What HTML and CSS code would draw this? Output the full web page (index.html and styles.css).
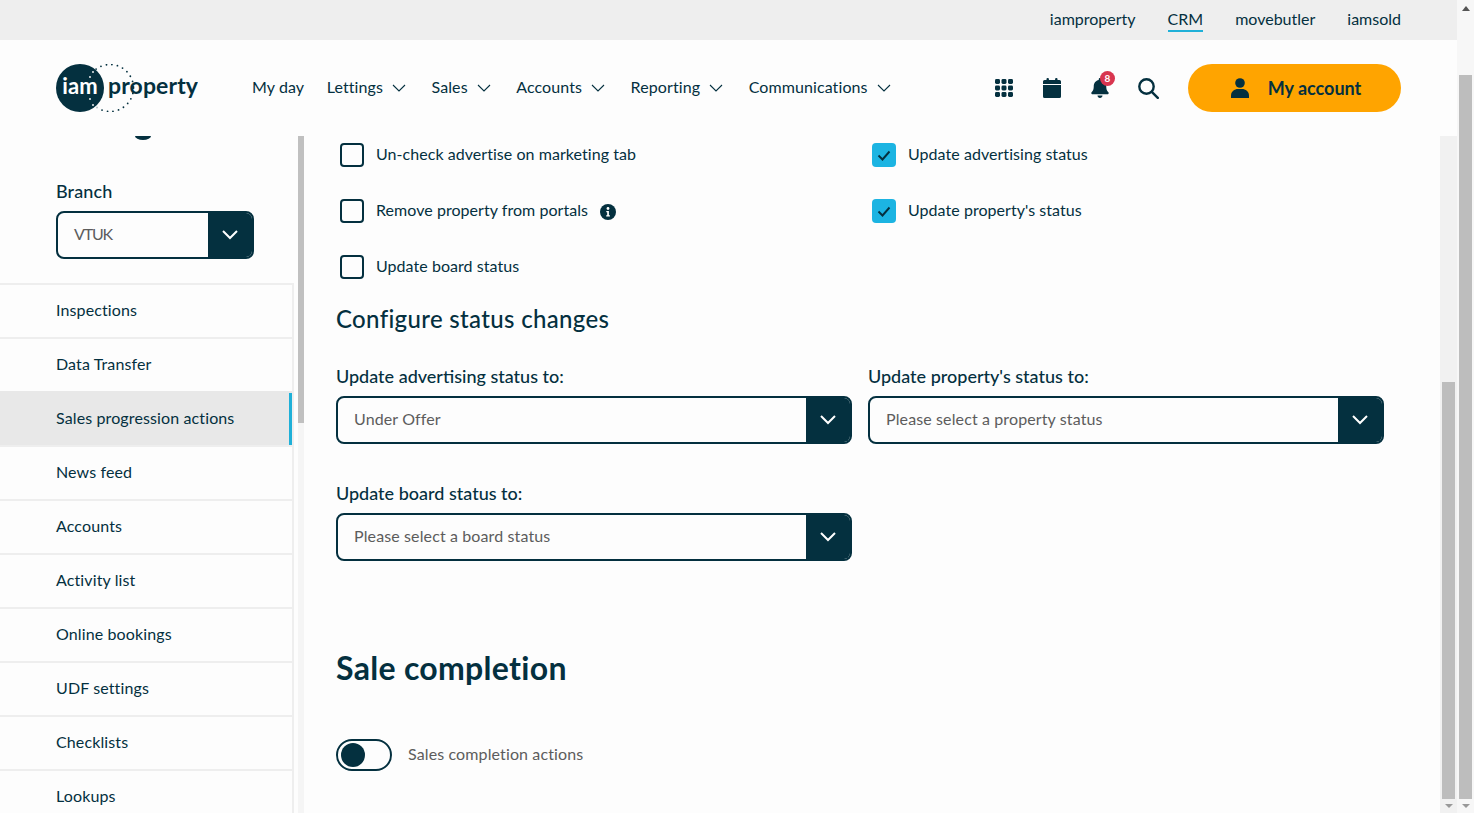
FILE: index.html
```html
<!DOCTYPE html>
<html lang="en">
<head>
	<meta charset="UTF-8">
	<meta name="viewport" content="width=device-width, initial-scale=1">
	<title>Sales progression actions</title>
	<link rel="stylesheet" href="styles.css">
</head>
<body>
	<div class="page">
		<div class="topbar">
			<a class="top-link">iamproperty</a>
			<a class="top-link active">CRM</a>
			<a class="top-link">movebutler</a>
			<a class="top-link">iamsold</a>
		</div>

		<header class="header">
			<svg class="logo" width="142" height="48" viewBox="0 0 142 48">
				<circle cx="54" cy="24" r="23.5" fill="none" stroke="#04303f" stroke-width="1.800" stroke-linecap="round" stroke-dasharray="0 5.600"/>
				<circle cx="24" cy="24" r="24" fill="#04303f"/>
				<g fill="#fff">
					<circle cx="37" cy="8" r="0.900"/>
					<circle cx="34" cy="13" r="0.900"/>
					<circle cx="34" cy="35" r="0.900"/>
					<circle cx="37" cy="41" r="0.900"/>
					<circle cx="41" cy="44" r="0.900"/>
				</g>
				<text x="24" y="30" text-anchor="middle" class="logo-iam">iam</text>
				<text x="52" y="30" class="logo-word">property</text>
			</svg>
			<nav class="nav">
				<a class="nav-item">My day</a>
				<a class="nav-item">Lettings <svg class="chev" width="14" height="8" viewBox="0 0 14 8"><path d="M1 1l6 6 6-6" fill="none" stroke="#04303f" stroke-width="1.100"/></svg></a>
				<a class="nav-item">Sales <svg class="chev" width="14" height="8" viewBox="0 0 14 8"><path d="M1 1l6 6 6-6" fill="none" stroke="#04303f" stroke-width="1.100"/></svg></a>
				<a class="nav-item">Accounts <svg class="chev" width="14" height="8" viewBox="0 0 14 8"><path d="M1 1l6 6 6-6" fill="none" stroke="#04303f" stroke-width="1.100"/></svg></a>
				<a class="nav-item">Reporting <svg class="chev" width="14" height="8" viewBox="0 0 14 8"><path d="M1 1l6 6 6-6" fill="none" stroke="#04303f" stroke-width="1.100"/></svg></a>
				<a class="nav-item">Communications <svg class="chev" width="14" height="8" viewBox="0 0 14 8"><path d="M1 1l6 6 6-6" fill="none" stroke="#04303f" stroke-width="1.100"/></svg></a>
			</nav>
			<div class="tools">
				<span class="tool">
					<svg width="18" height="18" viewBox="0 0 18 18" fill="#04303f">
						<rect x="0" y="0" width="5" height="5" rx="1.400"/><rect x="6.500" y="0" width="5" height="5" rx="1.400"/><rect x="13" y="0" width="5" height="5" rx="1.400"/>
						<rect x="0" y="6.500" width="5" height="5" rx="1.400"/><rect x="6.500" y="6.500" width="5" height="5" rx="1.400"/><rect x="13" y="6.500" width="5" height="5" rx="1.400"/>
						<rect x="0" y="13" width="5" height="5" rx="1.400"/><rect x="6.500" y="13" width="5" height="5" rx="1.400"/><rect x="13" y="13" width="5" height="5" rx="1.400"/>
					</svg>
				</span>
				<span class="tool">
					<svg width="18" height="20" viewBox="0 0 18 20" fill="#04303f">
						<rect x="3.500" y="0" width="2.400" height="4" rx="1"/><rect x="12.100" y="0" width="2.400" height="4" rx="1"/>
						<path d="M1.500 2h15A1.500 1.500 0 0 1 18 3.500V6H0V3.500A1.500 1.500 0 0 1 1.500 2zM0 7h18v11.500a1.500 1.500 0 0 1-1.500 1.500h-15A1.500 1.500 0 0 1 0 18.500z"/>
					</svg>
				</span>
				<span class="tool bell">
					<svg width="18" height="20" viewBox="0 0 448 512" fill="#04303f"><path d="M224 512c35.320 0 63.970-28.650 63.970-64H160.030c0 35.350 28.650 64 63.970 64zm215.390-149.710c-19.320-20.760-55.470-51.990-55.470-154.290 0-77.700-54.480-139.900-127.940-155.160V32c0-17.670-14.320-32-31.980-32s-31.980 14.330-31.980 32v20.840C118.560 68.100 64.080 130.300 64.080 208c0 102.300-36.150 133.530-55.470 154.290-6 6.450-8.660 14.160-8.610 21.710.11 16.400 12.980 32 32.100 32h383.800c19.120 0 32-15.600 32.100-32 .05-7.550-2.610-15.270-8.610-21.710z"/></svg>
					<span class="badge">8</span>
				</span>
				<span class="tool">
					<svg width="21" height="21" viewBox="0 0 21 21" fill="none" stroke="#04303f" stroke-width="2.400"><circle cx="8.500" cy="8.500" r="7.200"/><path d="M13.800 13.800l6 6" stroke-linecap="round"/></svg>
				</span>
				<a class="account">
					<svg width="18" height="20" viewBox="0 0 18 20" fill="#04303f"><circle cx="9" cy="5" r="4.800"/><path d="M0 20v-2.500C0 13.400 3.500 11 7 11h4c3.500 0 7 2.400 7 6.500V20z"/></svg>
					My account
				</a>
			</div>
		</header>

		<div class="main">
			<aside class="sidebar">
				<div class="side-inner">
					<div class="side-top">
						<span class="sliver"></span>
						<label class="side-label">Branch</label>
						<div class="select select-small">
							<span class="select-text">VTUK</span>
							<span class="select-btn"><svg width="16" height="10" viewBox="0 0 16 10"><path d="M1 1l7 7 7-7" fill="none" stroke="#fff" stroke-width="2"/></svg></span>
						</div>
					</div>
					<ul class="side-nav">
						<li class="side-item">Inspections</li>
						<li class="side-item">Data Transfer</li>
						<li class="side-item selected">Sales progression actions</li>
						<li class="side-item">News feed</li>
						<li class="side-item">Accounts</li>
						<li class="side-item">Activity list</li>
						<li class="side-item">Online bookings</li>
						<li class="side-item">UDF settings</li>
						<li class="side-item">Checklists</li>
						<li class="side-item">Lookups</li>
					</ul>
				</div>
				<div class="side-scroll"><div class="side-thumb"></div></div>
			</aside>

			<section class="content">
				<div class="checks">
					<label class="check"><span class="box"></span><span class="check-text">Un-check advertise on marketing tab</span></label>
					<label class="check"><span class="box on"><svg width="14" height="11" viewBox="0 0 14 11"><path d="M1.500 5.500l4 4 7-8" fill="none" stroke="#04303f" stroke-width="1.900"/></svg></span><span class="check-text">Update advertising status</span></label>
					<label class="check"><span class="box"></span><span class="check-text">Remove property from portals</span>
						<svg class="info" width="16" height="16" viewBox="0 0 16 16"><circle cx="8" cy="8" r="8" fill="#04303f"/><circle cx="8" cy="4.500" r="1.400" fill="#fff"/><path d="M6.300 7h2.600v4.200h1v1.300H6.200v-1.300h1V8.300h-.9z" fill="#fff"/></svg>
					</label>
					<label class="check"><span class="box on"><svg width="14" height="11" viewBox="0 0 14 11"><path d="M1.500 5.500l4 4 7-8" fill="none" stroke="#04303f" stroke-width="1.900"/></svg></span><span class="check-text">Update property's status</span></label>
					<label class="check"><span class="box"></span><span class="check-text">Update board status</span></label>
				</div>

				<h2 class="sub-heading">Configure status changes</h2>

				<div class="fields">
					<div class="field">
						<label class="field-label">Update advertising status to:</label>
						<div class="select">
							<span class="select-text">Under Offer</span>
							<span class="select-btn"><svg width="16" height="10" viewBox="0 0 16 10"><path d="M1 1l7 7 7-7" fill="none" stroke="#fff" stroke-width="2"/></svg></span>
						</div>
					</div>
					<div class="field">
						<label class="field-label">Update property's status to:</label>
						<div class="select">
							<span class="select-text">Please select a property status</span>
							<span class="select-btn"><svg width="16" height="10" viewBox="0 0 16 10"><path d="M1 1l7 7 7-7" fill="none" stroke="#fff" stroke-width="2"/></svg></span>
						</div>
					</div>
					<div class="field">
						<label class="field-label">Update board status to:</label>
						<div class="select">
							<span class="select-text">Please select a board status</span>
							<span class="select-btn"><svg width="16" height="10" viewBox="0 0 16 10"><path d="M1 1l7 7 7-7" fill="none" stroke="#fff" stroke-width="2"/></svg></span>
						</div>
					</div>
				</div>

				<h1 class="heading">Sale completion</h1>

				<div class="toggle-row">
					<span class="toggle"><span class="knob"></span></span>
					<span class="toggle-text">Sales completion actions</span>
				</div>
			</section>

			<div class="scrollbar inner">
				<div class="scroll-space"></div>
				<div class="scroll-thumb"></div>
				<span class="arrow-down"></span>
			</div>
		</div>
	</div>

	<div class="scrollbar outer">
		<span class="arrow-up"></span>
		<div class="scroll-thumb"></div>
		<span class="arrow-down"></span>
	</div>
</body>
</html>
```

FILE: styles.css
```css
* {
	box-sizing: border-box;
}

html, body {
	height: 100%;
}

body {
	margin: 0;
	display: flex;
	overflow: hidden;
	font-family: 'Lato', sans-serif;
	font-size: 16px;
	letter-spacing: 0.12px;
	color: #04303f;
	background-color: #fdfdfd;
}

.page {
	flex: 1;
	min-width: 0;
	display: flex;
	flex-direction: column;
	height: 813px;
}

/* top strip */
.topbar {
	height: 40px;
	flex: none;
	display: flex;
	justify-content: flex-end;
	align-items: flex-start;
	gap: 32px;
	padding: 9px 56px 0 0;
	background-color: #eeeeee;
	letter-spacing: 0;
}

.top-link {
	height: 23px;
	line-height: 19px;
	font-size: 16px;
}

.top-link.active {
	border-bottom: 2px solid #1fb0d8;
}

/* main header */
.header {
	height: 96px;
	flex: none;
	display: flex;
	align-items: center;
	padding: 0 56px;
}

.logo {
	flex: none;
	margin-right: 54px;
}

.logo-iam {
	font-family: 'Lato', sans-serif;
	font-size: 22px;
	font-weight: 700;
	fill: #fff;
}

.logo-word {
	font-family: 'Lato', sans-serif;
	font-size: 23px;
	font-weight: 700;
	fill: #04303f;
}

.nav {
	display: flex;
	align-items: center;
	gap: 25.5px;
	margin-bottom: 3px;
	letter-spacing: 0.1px;
}

.nav-item {
	display: flex;
	align-items: center;
	gap: 9px;
	font-size: 16px;
}

.nav-item:first-child {
	margin-right: -3px;
}

.chev {
	margin-top: 3px;
}

.tools {
	margin-left: auto;
	display: flex;
	align-items: center;
}

.tool {
	position: relative;
	width: 48px;
	height: 48px;
	display: flex;
	align-items: center;
	justify-content: center;
}

.badge {
	position: absolute;
	top: 7px;
	left: 24px;
	width: 15px;
	height: 15px;
	border-radius: 50%;
	background-color: #d8354f;
	color: #fff;
	font-size: 10px;
	font-weight: 700;
	line-height: 15px;
	text-align: center;
}

.account {
	width: 213px;
	height: 48px;
	margin-left: 16px;
	padding-left: 3px;
	display: flex;
	align-items: center;
	justify-content: center;
	gap: 19px;
	border-radius: 24px;
	background-color: #ffa400;
	font-size: 18px;
	font-weight: 700;
	letter-spacing: 0;
}

.main {
	flex: 1;
	min-height: 0;
	display: flex;
}

/* left column */
.sidebar {
	width: 304px;
	flex: none;
	display: flex;
	justify-content: space-between;
}

.side-inner {
	width: 294px;
	overflow: hidden;
}

.side-top {
	height: 147px;
	padding-left: 56px;
}

.sliver {
	display: block;
	width: 16px;
	height: 4px;
	margin-left: 79px;
	border-radius: 0 0 8px 8px / 0 0 4px 4px;
	background-color: #04303f;
}

.side-label {
	display: block;
	margin-top: 40px;
	height: 24px;
	line-height: 22px;
	font-size: 18px;
	font-weight: 500;
}

.side-nav {
	list-style: none;
	margin: 0;
	padding: 0;
	border-top: 2px solid #eeeeee;
	border-right: 2px solid #eeeeee;
}

.side-item {
	height: 54px;
	padding-left: 56px;
	line-height: 49px;
	border-bottom: 2px solid #eeeeee;
}

.side-item.selected {
	position: relative;
	height: 56px;
	margin-top: -2px;
	padding-top: 2px;
	background-color: #e8e8e8;
}

.side-item.selected::after {
	content: "";
	position: absolute;
	top: 2px;
	bottom: 0;
	right: 0;
	width: 3px;
	background-color: #1fb0d8;
}

.side-scroll {
	width: 6px;
	background-color: #f5f5f5;
}

.side-thumb {
	height: 287px;
	background-color: #c0c0c0;
}

/* form */
.content {
	flex: 1;
	min-width: 0;
	padding: 7px 0 0 32px;
	overflow: hidden;
}

.checks, .fields {
	display: grid;
	grid-template-columns: 516px 516px;
	column-gap: 16px;
}

.checks {
	row-gap: 32px;
}

.check {
	height: 24px;
	padding-left: 4px;
	display: flex;
	align-items: center;
	gap: 12px;
}

.check-text {
	padding-bottom: 4px;
	letter-spacing: 0.05px;
}

.box {
	width: 24px;
	height: 24px;
	flex: none;
	display: flex;
	align-items: center;
	justify-content: center;
	border: 2px solid #04303f;
	border-radius: 4px;
}

.box.on {
	border: none;
	background-color: #1cb4e2;
}

.info {
	flex: none;
	margin-top: 2px;
}

.sub-heading {
	margin: 24px 0 0;
	height: 32px;
	line-height: 32px;
	font-size: 24px;
	font-weight: 500;
	letter-spacing: 0.33px;
}

.fields {
	margin-top: 30px;
	row-gap: 38px;
}

.field-label {
	display: block;
	height: 24px;
	line-height: 22px;
	margin-bottom: 7px;
	font-size: 18px;
	font-weight: 500;
	letter-spacing: 0;
}

.select {
	height: 48px;
	display: flex;
	border: 2px solid #04303f;
	border-radius: 8px;
	overflow: hidden;
}

.select-small {
	width: 198px;
	margin-top: 7px;
}

.select-small .select-text {
	letter-spacing: -1.200px;
}

.select-text {
	flex: 1;
	padding-left: 16px;
	line-height: 42px;
	color: #5c5c5c;
}

.select-btn {
	width: 44px;
	display: flex;
	align-items: center;
	justify-content: center;
	background-color: #04303f;
}

.heading {
	margin: 90px 0 0;
	height: 36px;
	line-height: 34px;
	font-size: 32px;
	font-weight: 700;
	letter-spacing: 0.3px;
}

.toggle-row {
	margin-top: 52px;
	display: flex;
	align-items: center;
	gap: 16px;
}

.toggle {
	width: 56px;
	height: 32px;
	display: flex;
	align-items: center;
	padding-left: 3px;
	border: 2px solid #04303f;
	border-radius: 16px;
}

.knob {
	width: 24px;
	height: 24px;
	border-radius: 50%;
	background-color: #04303f;
}

.toggle-text {
	padding-bottom: 4px;
	color: #5c5c5c;
}

/* scrollbars */
.scrollbar {
	width: 17px;
	flex: none;
	display: flex;
	flex-direction: column;
	align-items: center;
	background-color: #f1f1f1;
}

.scrollbar.outer {
	background-color: #f7f7f7;
}

.scroll-space {
	height: 246px;
	flex: none;
}

.scroll-thumb {
	width: 13px;
	flex: 1;
	background-color: #bdbdbd;
}

.arrow-up, .arrow-down {
	flex: none;
	width: 0;
	height: 0;
	border-left: 4px solid transparent;
	border-right: 4px solid transparent;
}

.arrow-up {
	margin: 6px 0 64px;
	border-bottom: 5px solid #555;
}

.arrow-down {
	margin: 5px 0 5px;
	border-top: 4px solid #999;
}
```
